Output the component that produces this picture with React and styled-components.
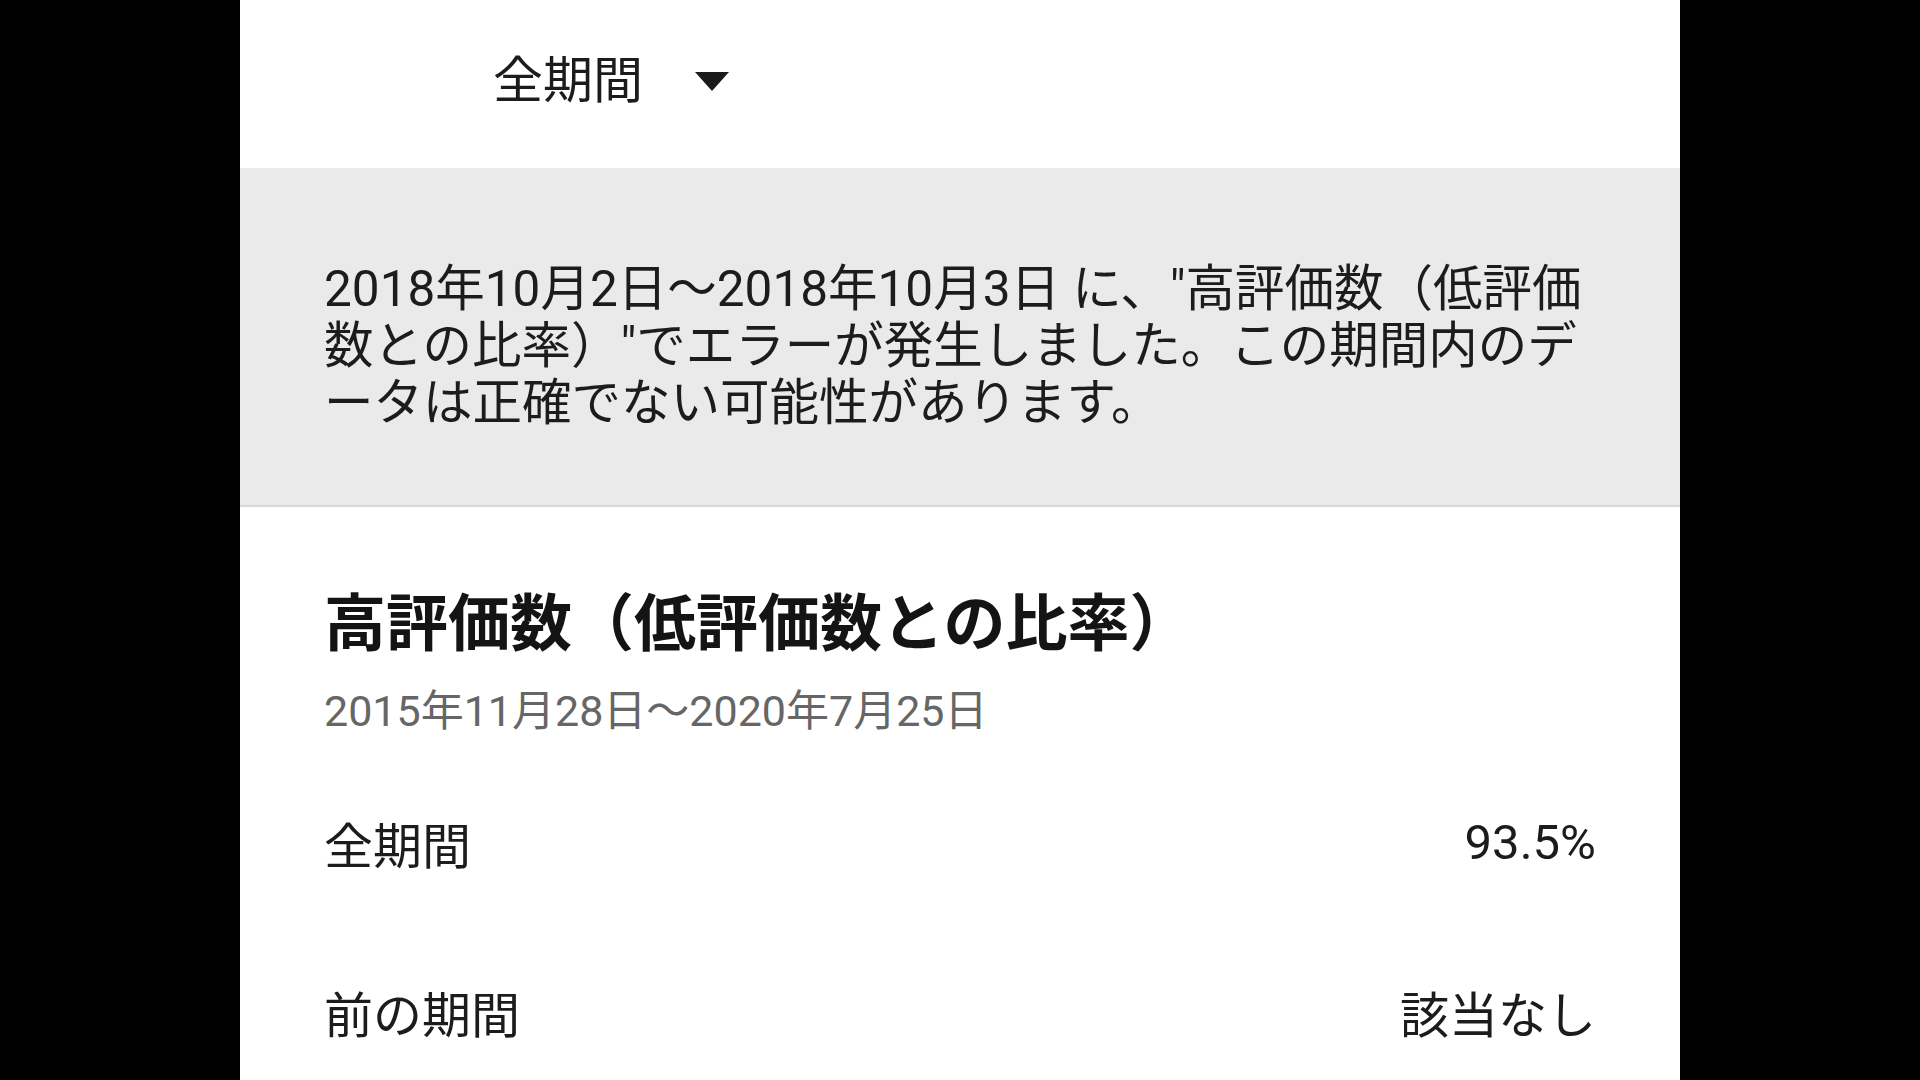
import React from 'react';
import styled, { createGlobalStyle } from 'styled-components';

const GlobalStyle = createGlobalStyle`
  html, body {
    margin: 0;
    padding: 0;
    background: #000;
  }
  body {
    font-family: Roboto, "Noto Sans CJK JP", sans-serif;
  }
`;

const Screen = styled.div`
  width: 1920px;
  height: 1080px;
  background: #000;
  display: flex;
  justify-content: center;
  overflow: hidden;
`;

const Panel = styled.main`
  width: 1440px;
  background: #fff;
  display: flex;
  flex-direction: column;
  & > * {
    flex-shrink: 0;
  }
`;

const Toolbar = styled.div`
  height: 168px;
  display: flex;
  align-items: center;
  padding-left: 253px;
  padding-bottom: 16px;
  box-sizing: border-box;
`;

const PeriodButton = styled.button`
  display: flex;
  align-items: center;
  gap: 52px;
  border: none;
  background: none;
  padding: 0;
  font-family: inherit;
  font-size: 50px;
  color: #1c1c1c;
  cursor: pointer;
`;

const Caret = styled.span`
  width: 0;
  height: 0;
  border-left: 17px solid transparent;
  border-right: 17px solid transparent;
  border-top: 19px solid #1a1a1a;
  margin-top: 10px;
`;

const Notice = styled.section`
  background: #eaeaea;
  border-bottom: 2px solid #d8d8d8;
  height: 339px;
  box-sizing: border-box;
  display: flex;
  align-items: center;
  padding: 20px 84px 0;
`;

const NoticeText = styled.p`
  margin: 0;
  font-size: 49.5px;
  line-height: 57px;
  color: #1c1c1c;
`;

const Content = styled.section`
  padding: 78px 84px 0;
  display: flex;
  flex-direction: column;
`;

const Title = styled.h1`
  margin: 0;
  font-size: 62px;
  line-height: 80px;
  font-weight: 700;
  color: #141414;
`;

const DateRange = styled.div`
  font-size: 43px;
  line-height: 60px;
  color: #666;
  margin-top: 16px;
`;

const StatList = styled.div`
  display: flex;
  flex-direction: column;
  margin-top: 17px;
`;

const StatRow = styled.div`
  height: 169px;
  display: flex;
  align-items: center;
  justify-content: space-between;
  font-size: 49px;
  color: #1c1c1c;
`;

const StatLabel = styled.span``;

const StatValue = styled.span``;

const stats = [
  { label: '全期間', value: '93.5%' },
  { label: '前の期間', value: '該当なし' },
];

export default function App() {
  return (
    <>
      <GlobalStyle />
      <Screen>
        <Panel>
          <Toolbar>
            <PeriodButton type="button">
              全期間
              <Caret />
            </PeriodButton>
          </Toolbar>
          <Notice>
            <NoticeText>
              2018年10月2日～2018年10月3日 に、"高評価数（低評価数との比率）"でエラーが発生しました。この期間内のデータは正確でない可能性があります。
            </NoticeText>
          </Notice>
          <Content>
            <Title>高評価数（低評価数との比率）</Title>
            <DateRange>2015年11月28日～2020年7月25日</DateRange>
            <StatList>
              {stats.map((s) => (
                <StatRow key={s.label}>
                  <StatLabel>{s.label}</StatLabel>
                  <StatValue>{s.value}</StatValue>
                </StatRow>
              ))}
            </StatList>
          </Content>
        </Panel>
      </Screen>
    </>
  );
}
